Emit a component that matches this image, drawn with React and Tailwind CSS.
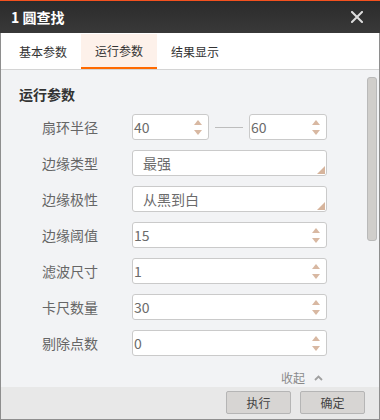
import React from "react";

function Spinner() {
  return (
    <div className="flex flex-col items-center gap-[5px] mr-[6px]">
      <svg width="8" height="5" viewBox="0 0 8 5"><polygon points="4,0 8,5 0,5" fill="#d8b8a2" /></svg>
      <svg width="8" height="5" viewBox="0 0 8 5"><polygon points="0,0 8,0 4,5" fill="#d8b8a2" /></svg>
    </div>
  );
}

function NumInput({ value, w = "w-[195px]" }) {
  return (
    <div className={`${w} h-[26px] bg-white border border-[#cacaca] rounded-[3px] flex items-center justify-between`}>
      <span className="pl-[1px] text-[14px] leading-[20px] text-[#6b6b6b]">{value}</span>
      <Spinner />
    </div>
  );
}

function Select({ value }) {
  return (
    <div className="relative w-[195px] h-[26px] bg-white border border-[#cacaca] rounded-[3px] flex items-center">
      <span className="pl-[10px] text-[14px] leading-[20px] text-[#6b6b6b]">{value}</span>
      <svg className="absolute right-[1px] bottom-[1px]" width="8" height="8" viewBox="0 0 8 8">
        <polygon points="8,0 8,8 0,8" fill="#d6b49c" />
      </svg>
    </div>
  );
}

function Row({ label, children }) {
  return (
    <div className="flex items-center h-[26px] pl-[41px]">
      <div className="w-[90px] text-[14px] leading-[20px] text-[#666666]">{label}</div>
      {children}
    </div>
  );
}

export default function App() {
  return (
    <div className="w-[380px] h-[420px] flex flex-col overflow-hidden font-['Noto_Sans_CJK_SC','Noto_Sans',sans-serif]">
      <div className="h-[33px] shrink-0 border-t border-[#f4511e] bg-linear-to-b from-[#2b2b2b] to-[#393939] flex items-center justify-between pl-[11px] pr-[17px]">
        <span className="text-white font-bold text-[14px] leading-[20px]">1 圆查找</span>
        <svg width="12" height="12" viewBox="0 0 12 12">
          <path d="M1 1 L11 11 M11 1 L1 11" stroke="#dcdcdc" strokeWidth="2" strokeLinecap="square" />
        </svg>
      </div>
      <div className="flex-1 flex flex-col border-x border-b border-[#8e8e8e] min-h-0">
        <div className="h-[37px] shrink-0 bg-white border-b border-[#d4d4d4] flex items-end pl-[4px]">
          <div className="h-[35px] px-[14px] flex items-center text-[12px] leading-[16px] text-[#333]">基本参数</div>
          <div className="h-[35px] px-[14px] flex items-center text-[12px] leading-[16px] text-[#333] bg-[#fdf1ea] border-b-2 border-[#ff6a00]">运行参数</div>
          <div className="h-[35px] px-[14px] flex items-center text-[12px] leading-[16px] text-[#333]">结果显示</div>
        </div>
        <div className="relative flex-1 min-h-0 bg-[#f2f3f5] overflow-hidden">
          <div className="pl-[18px] pt-[14px] text-[14px] leading-[20px] font-bold text-[#333]">运行参数</div>
          <div className="mt-[10px] flex flex-col gap-[10px]">
            <Row label="扇环半径">
              <NumInput value="40" w="w-[77px]" />
              <div className="mx-[6px] w-[28px] h-px bg-[#bdbdbd]" />
              <NumInput value="60" w="w-[78px]" />
            </Row>
            <Row label="边缘类型"><Select value="最强" /></Row>
            <Row label="边缘极性"><Select value="从黑到白" /></Row>
            <Row label="边缘阈值"><NumInput value="15" /></Row>
            <Row label="滤波尺寸"><NumInput value="1" /></Row>
            <Row label="卡尺数量"><NumInput value="30" /></Row>
            <Row label="剔除点数"><NumInput value="0" /></Row>
          </div>
          <div className="mt-[14px] flex justify-end items-center pr-[56px] gap-[9px] text-[12px] leading-[16px] text-[#8a8a8a]">
            <span>收起</span>
            <svg width="9" height="6" viewBox="0 0 9 6"><path d="M1 5 L4.5 1.5 L8 5" stroke="#a0a0a0" strokeWidth="1.8" fill="none" /></svg>
          </div>
          <div className="absolute right-[2px] top-[7px] w-[10px] h-[164px] bg-[#d0cecb] border border-[#b9b9b9] rounded-[3px]" />
        </div>
        <div className="h-[32px] shrink-0 bg-[#e8e8e8] flex justify-end items-start pt-[4px] pr-[14px] gap-[9px]">
          <button className="w-[65px] h-[23px] bg-[#d7d5d3] border border-[#b5b5b5] rounded-[2px] text-[12px] leading-[16px] text-[#444]">执行</button>
          <button className="w-[65px] h-[23px] bg-[#d7d5d3] border border-[#b5b5b5] rounded-[2px] text-[12px] leading-[16px] text-[#444]">确定</button>
        </div>
      </div>
    </div>
  );
}
